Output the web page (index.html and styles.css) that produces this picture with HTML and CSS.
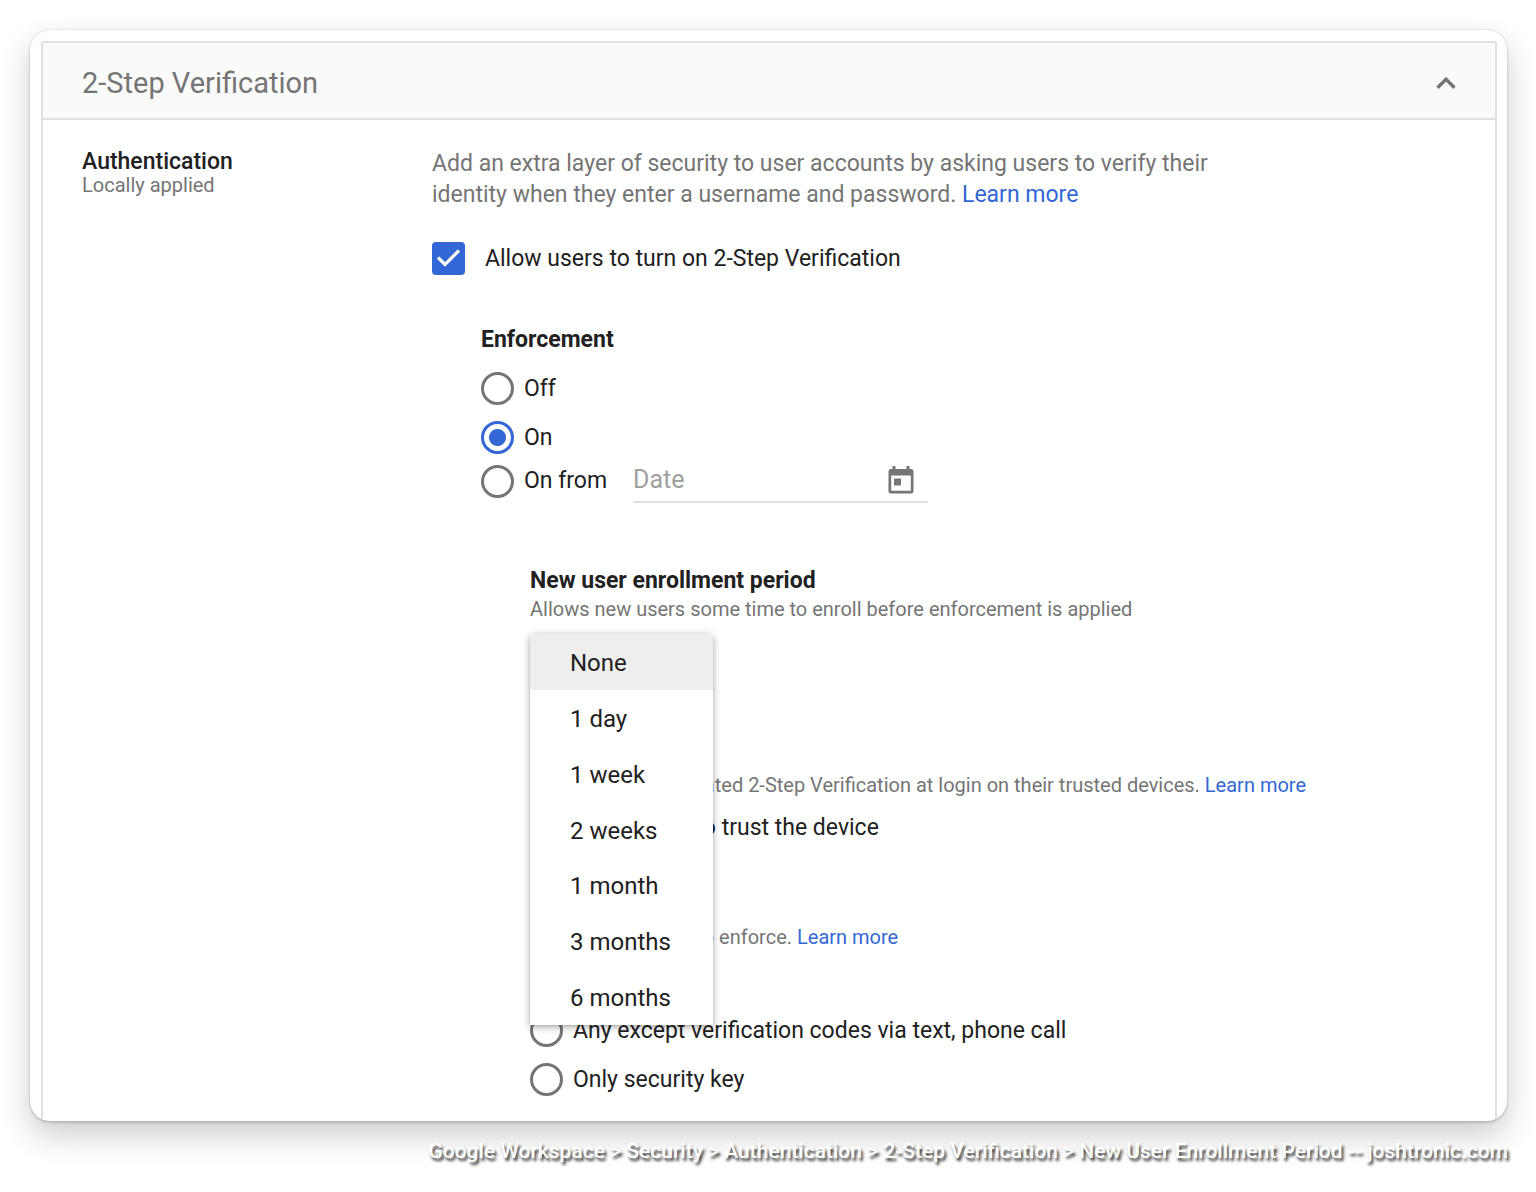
FILE: index.html
```html
<!DOCTYPE html>
<html lang="en">
<head>
    <title>2-Step Verification</title>
    <meta charset="UTF-8">
    <meta name="viewport" content="width=device-width, initial-scale=1.0">
    <link rel="stylesheet" href="styles.css">
</head>
<body>
    <main class="window">
        <section class="panel">
            <header class="panel-header">
                <h1>2-Step Verification</h1>
                <button class="icon-btn" type="button" aria-label="Collapse">
                    <svg width="20" height="12" viewBox="0 0 20 12"><path d="M1.500 10.700 10 2.200l8.500 8.500" fill="none" stroke="#757575" stroke-width="3.400"/></svg>
                </button>
            </header>

            <div class="panel-body">
                <div class="side">
                    <h2>Authentication</h2>
                    <p class="hint">Locally applied</p>
                </div>

                <div class="settings">
                    <p class="intro">Add an extra layer of security to user accounts by asking users to verify their identity when they enter a username and password. <a href="#">Learn more</a></p>

                    <label class="option allow">
                        <input type="checkbox" checked>
                        <span>Allow users to turn on 2-Step Verification</span>
                    </label>

                    <div class="enforcement">
                        <h3>Enforcement</h3>
                        <div class="choices">
                            <label class="option"><input type="radio" name="enforcement"><span>Off</span></label>
                            <label class="option"><input type="radio" name="enforcement" checked><span>On</span></label>
                            <div class="date-row">
                                <label class="option"><input type="radio" name="enforcement"><span>On from</span></label>
                                <div class="date-field">
                                    <input type="text" placeholder="Date" aria-label="Date">
                                    <button class="icon-btn" type="button" aria-label="Pick a date">
                                        <svg width="26" height="28" viewBox="0 0 26 28"><path fill="#757575" fill-rule="evenodd" d="M4.500 0h3v3h11V0h3v3H23a2.500 2.500 0 0 1 2.500 2.500v19.500A2.500 2.500 0 0 1 23 27.500H3A2.500 2.500 0 0 1 .5 25V5.500A2.500 2.500 0 0 1 3 3h1.500zM3.200 9.500v15.300h19.600V9.500zM6 12.500h7v7H6z"/></svg>
                                    </button>
                                </div>
                            </div>
                        </div>

                        <div class="details">
                            <div class="period">
                                <h3>New user enrollment period</h3>
                                <p class="hint">Allows new users some time to enroll before enforcement is applied</p>
                                <div class="dropdown">
                                    <ul class="menu" role="listbox" aria-label="New user enrollment period">
                                        <li role="option" aria-selected="true">None</li>
                                        <li role="option">1 day</li>
                                        <li role="option">1 week</li>
                                        <li role="option">2 weeks</li>
                                        <li role="option">1 month</li>
                                        <li role="option">3 months</li>
                                        <li role="option">6 months</li>
                                    </ul>
                                </div>
                            </div>

                            <div class="frequency">
                                <h3>Frequency</h3>
                                <p class="hint">Users can skip repeated 2-Step Verification at login on their trusted devices. <a href="#">Learn more</a></p>
                                <label class="option trust">
                                    <input type="checkbox">
                                    <span>Allow user to trust the device</span>
                                </label>
                            </div>

                            <div class="methods">
                                <h3>Methods</h3>
                                <p class="hint">Select the method to enforce. <a href="#">Learn more</a></p>
                                <label class="option"><input type="radio" name="method" checked><span>Any</span></label>
                                <label class="option"><input type="radio" name="method"><span>Any except verification codes via text, phone call</span></label>
                                <label class="option"><input type="radio" name="method"><span>Only security key</span></label>
                            </div>
                        </div>
                    </div>
                </div>
            </div>
        </section>
    </main>

    <footer class="caption">Google Workspace &gt; Security &gt; Authentication &gt; 2-Step Verification &gt; New User Enrollment Period -- joshtronic.com</footer>
</body>
</html>
```
FILE: styles.css
```css
* {
    box-sizing: border-box;
    margin: 0;
    padding: 0;
}

body {
    font-family: Roboto, Arial, sans-serif;
    font-size: 23px;
    line-height: 32px;
    color: #212121;
    background: #fff;
    padding: 30px 28px 20px 30px;
}

a {
    color: #3367d6;
    text-decoration: none;
}

.window {
    margin-right: 1px;
    padding: 11px 10px 0 11px;
    background: #fff;
    border-radius: 20px;
    overflow: hidden;
    box-shadow: 0 0 2px rgba(0,0,0,0.2), 0 2px 3px rgba(0,0,0,0.12), 0 14px 32px rgba(0,0,0,0.2);
}

.panel {
    border: 2px solid #e0e0e0;
    border-bottom: none;
    border-radius: 3px 3px 0 0;
}

.panel-header {
    display: flex;
    align-items: center;
    justify-content: space-between;
    height: 77px;
    padding: 5px 39px 0;
    background: #fafafa;
    border-bottom: 2px solid #e0e0e0;
}

h1 {
    font-size: 29px;
    font-weight: 400;
    color: #757575;
}

h2 {
    margin-top: 3px;
    font-size: 23px;
    font-weight: 500;
    line-height: 22px;
}

h3 {
    font-size: 23px;
    font-weight: 700;
    line-height: 32px;
}

.icon-btn {
    display: flex;
    background: none;
    border: none;
    cursor: pointer;
}

.panel-body {
    display: flex;
    padding: 28px 39px 17px;
}

.side {
    flex: 0 0 350px;
}

.settings {
    flex: 1;
    min-width: 0;
}

.hint {
    font-size: 20px;
    line-height: 24px;
    color: #757575;
}

.intro {
    max-width: 800px;
    line-height: 31px;
    color: #757575;
}

.option {
    display: flex;
    align-items: center;
    gap: 10px;
    height: 49px;
}

.option input {
    flex: none;
    appearance: none;
    width: 33px;
    height: 33px;
    border: 3px solid #757575;
}

.option input[type="radio"] {
    border-radius: 50%;
}

.option input[type="radio"]:checked {
    border-color: #3367d6;
    background: radial-gradient(circle, #3367d6 8px, transparent 9px);
}

.option input[type="checkbox"] {
    border-radius: 4px;
}

.option input[type="checkbox"]:checked {
    border: none;
    background: #3367d6 url("data:image/svg+xml,%3Csvg xmlns='http://www.w3.org/2000/svg' viewBox='0 0 33 33'%3E%3Cpath d='M6 15.500 13 22.500 27 8.500' fill='none' stroke='white' stroke-width='3.200'/%3E%3C/svg%3E");
}

.allow {
    gap: 20px;
    margin-top: 24px;
}

.enforcement {
    padding: 41px 0 0 49px;
}

.choices {
    margin-top: 8px;
}

.date-row {
    display: flex;
    align-items: center;
    gap: 26px;
    height: 38px;
}

.date-field {
    display: flex;
    align-items: center;
    width: 295px;
    height: 44px;
    padding-right: 14px;
    border-bottom: 2px solid #e0e0e0;
}

.date-field input {
    flex: 1;
    min-width: 0;
    font: inherit;
    font-size: 25px;
    border: none;
    outline: none;
    background: none;
}

.date-field input::placeholder {
    color: #a0a0a0;
}

.details {
    padding: 65px 0 0 49px;
}

.dropdown {
    position: relative;
    height: 56px;
    margin-top: 13px;
}

.menu {
    position: absolute;
    top: 0;
    left: 0;
    z-index: 1;
    display: flex;
    flex-direction: column;
    width: 183px;
    height: 391px;
    list-style: none;
    font-size: 24px;
    background: #fff;
    border-radius: 4px 4px 0 0;
    box-shadow: 0 2px 8px rgba(0,0,0,0.3), 0 1px 3px rgba(0,0,0,0.12);
}

.menu li {
    flex: 1;
    display: flex;
    align-items: center;
    padding: 2px 0 0 40px;
}

.menu li[aria-selected="true"] {
    background: #eee;
    border-radius: 4px 4px 0 0;
}

.frequency {
    margin-top: 51px;
}

.trust {
    gap: 20px;
    margin-top: 6px;
}

.methods {
    margin-top: 41px;
}

.methods .hint {
    margin-bottom: 8px;
}

.caption {
    margin-top: 14px;
    text-align: right;
    font-size: 21px;
    font-weight: 500;
    color: #fff;
    text-shadow: 2px 3px 3px rgba(0,0,0,0.8);
}
```
